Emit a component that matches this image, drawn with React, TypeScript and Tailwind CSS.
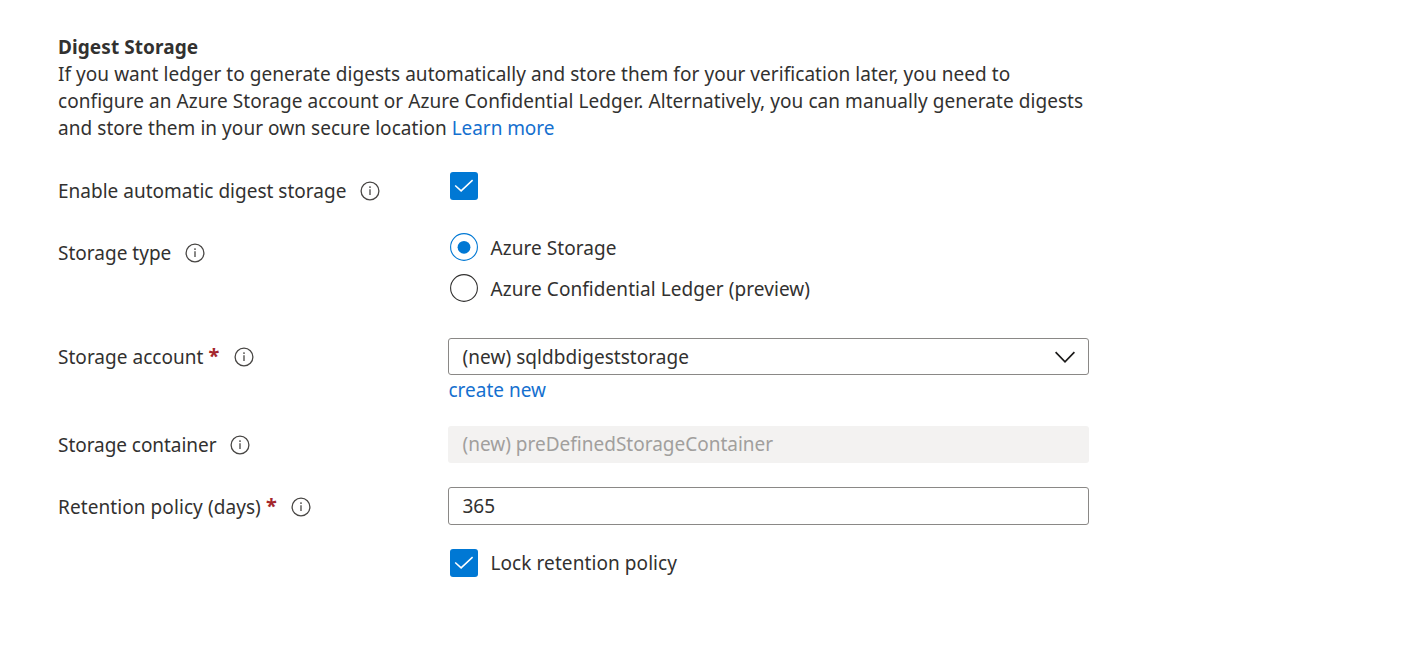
import type { ReactNode } from 'react';

function InfoIcon() {
  return (
    <svg className="size-5 shrink-0" viewBox="0 0 20 20" fill="none">
      <circle cx="10" cy="10" r="8.9" stroke="#484644" strokeWidth="1.3" />
      <path d="M10 8.3V14" stroke="#484644" strokeWidth="1.3" />
      <circle cx="10" cy="6.1" r="0.9" fill="#484644" />
    </svg>
  );
}

function Checkbox() {
  return (
    <span className="flex size-7 shrink-0 items-center justify-center rounded-[3px] bg-[#0078d4]">
      <svg className="size-7" viewBox="0 0 28 28" fill="none">
        <path d="M5.2 13.5L11.1 18.9L22.6 8.1" stroke="#fff" strokeWidth="1.5" />
      </svg>
    </span>
  );
}

function Radio({ checked = false }: { checked?: boolean }) {
  return (
    <svg className="size-7 shrink-0" viewBox="0 0 28 28" fill="none">
      <circle cx="14" cy="14" r="13.4" stroke={checked ? '#0078d4' : '#323130'} strokeWidth="1.1" />
      {checked && <circle cx="14" cy="14.3" r="6.4" fill="#0078d4" />}
    </svg>
  );
}

interface RowProps {
  label: ReactNode;
  required?: boolean;
  className: string;
  labelClassName: string;
  children: ReactNode;
}

function Row({ label, required = false, className, labelClassName, children }: RowProps) {
  return (
    <div className={`flex items-start ${className}`}>
      <div className={`flex w-[390px] shrink-0 items-center ${labelClassName}`}>
        {label}
        {required && <span className="ml-[5px] h-[27px] w-3 text-[20px] leading-[24px] font-bold text-[#a4262c]">*</span>}
        <span className="ml-[13.4px] flex pb-0.5">
          <InfoIcon />
        </span>
      </div>
      <div className="w-[641px]">{children}</div>
    </div>
  );
}

export default function App() {
  return (
    <main className="flex h-[657px] w-full flex-col overflow-hidden bg-white pl-[58px] font-['Noto_Sans',sans-serif] text-[19px] leading-[27px] whitespace-nowrap text-[#323130]">
      <h1 className="mt-[34px] text-[19px] leading-[27px] font-bold tracking-[0.08px]">Digest Storage</h1>
      <p>
        <span className="block tracking-[0.05px]">If you want ledger to generate digests automatically and store them for your verification later, you need to</span>
        <span className="block tracking-[0.062px]">configure an Azure Storage account or Azure Confidential Ledger. Alternatively, you can manually generate digests</span>
        <span className="block tracking-[0.05px]">
          and store them in your own secure location <a className="tracking-[-0.07px] text-[#1570cf]">Learn more</a>
        </span>
      </p>

      <Row className="mt-[30px] h-[61px]" labelClassName="pt-1.5" label={<span className="tracking-[0.01px]">Enable automatic digest storage</span>}>
        <div className="pl-0.5">
          <Checkbox />
        </div>
      </Row>

      <Row className="h-[105px]" labelClassName="pt-[7px]" label={<span className="tracking-[0.01px]">Storage type</span>}>
        <div className="flex flex-col gap-[13px] pl-0.5">
          <div className="flex h-7 items-center gap-[12.5px]">
            <Radio checked />
            <span className="pt-0.5 tracking-[0.05px]">Azure Storage</span>
          </div>
          <div className="flex h-7 items-center gap-[12.5px]">
            <Radio />
            <span className="pt-0.5 tracking-[0.065px]">Azure Confidential Ledger (preview)</span>
          </div>
        </div>
      </Row>

      <Row className="h-[88px]" labelClassName="pt-1.5" required label={<span className="tracking-[0.03px]">Storage account</span>}>
        <div className="flex h-[37px] items-center justify-between rounded-[3px] border border-[#8a8886] pr-[13px] pl-[13.5px]">
          <span className="pt-0.5 tracking-[0.05px]">(new) sqldbdigeststorage</span>
          <svg className="h-3 w-5" viewBox="0 0 20 12" fill="none">
            <path d="M0.6 1.2L10 10.8L19.4 1.2" stroke="#1b1a19" strokeWidth="1.7" />
          </svg>
        </div>
        <a className="mt-0.5 block pl-[0.5px] text-[#1570cf]">create new</a>
      </Row>

      <Row className="h-[61px]" labelClassName="pt-1.5" label={<span className="tracking-[-0.05px]">Storage container</span>}>
        <div className="flex h-[37px] items-center rounded-[3px] bg-[#f3f2f1] pl-[14.5px] text-[#a19f9d]">(new) preDefinedStorageContainer</div>
      </Row>

      <Row className="h-[62px]" labelClassName="pt-[7px]" required label={<span className="tracking-[0.08px]">Retention policy (days)</span>}>
        <div className="flex h-[38px] items-center rounded-[3px] border border-[#8a8886] pl-[13.5px]">365</div>
      </Row>

      <div className="ml-[392px] flex items-center gap-[12.5px]">
        <Checkbox />
        <span className="tracking-[0.08px]">Lock retention policy</span>
      </div>
    </main>
  );
}
